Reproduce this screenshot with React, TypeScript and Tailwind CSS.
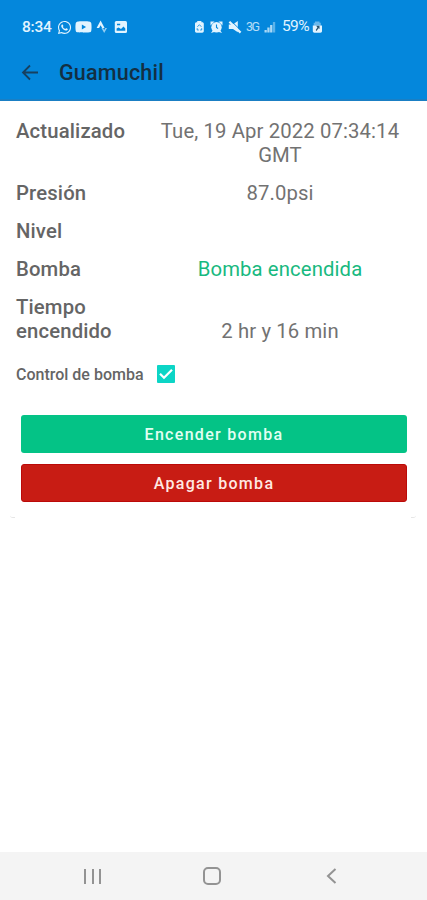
import type { ReactNode } from "react";
import { FaWhatsapp, FaYoutube } from "react-icons/fa";

type RowProps = {
  label: string;
  children?: ReactNode;
};

function StatusBar() {
  return (
    <div className="flex h-[54px] items-center pl-[22px] text-[#e2f4ff]">
      <span className="w-[35px] pt-px text-[15.5px] leading-none font-medium tracking-[-0.2px]">8:34</span>
      <FaWhatsapp className="size-[15px]" />
      <FaYoutube className="ml-[3px] h-[16px] w-[17px]" />
      {/* Strava */}
      <svg className="ml-[4px]" width="12" height="14" viewBox="0 0 12 14" fill="currentColor">
        <path d="M4.600 0.600 8.600 8H6.100L4.600 5.300 3.100 8H.6z" />
        <path d="M5.400 8h1.800l1 1.900 1-1.900H11L8.200 13z" opacity=".65" />
      </svg>
      {/* Picture */}
      <svg className="ml-[6px]" width="14" height="14" viewBox="0 0 14 14">
        <rect x=".8" y="1" width="12.200" height="12" rx="1.500" fill="currentColor" />
        <path d="M3 3.800h3.200v1.500H3zM2.600 10.800v-2.400l2-1 2.400 1.500 2.500-2.300 1.800 1.900v2.300z" fill="#0487dc" />
      </svg>

      <div className="ml-[66px] flex items-center">
        {/* Battery saver */}
        <svg width="11" height="14" viewBox="0 0 11 14">
          <path d="M3.200 1h4.200v1.200h.8c1 0 1.600.7 1.600 1.600V11c0 1-.6 1.700-1.600 1.700H2.600C1.600 12.700 1 12 1 11V3.800c0-.9.6-1.600 1.600-1.600h.6z" fill="currentColor" />
          <path d="M3.400 6.800 5.400 4.700l2 2.100M3.200 8.200v1.800h1.600M7.700 8.200v1.800H6.100" fill="none" stroke="#0487dc" strokeWidth=".8" />
        </svg>
        {/* Alarm */}
        <svg className="ml-[5px]" width="13" height="14" viewBox="0 0 13 14">
          <circle cx="6.500" cy="7.200" r="5.200" fill="currentColor" />
          <path d="M.5 1.500h4L.5 5.500zM12.500 1.500h-4l4 4zM1 13l2-3 2 1.700zM12 13l-2-3-2 1.700z" fill="currentColor" />
          <path d="M6.500 4.500v3l1.600 1" fill="none" stroke="#0487dc" strokeWidth="1.100" />
        </svg>
        {/* Muted */}
        <svg className="ml-[5px]" width="14" height="14" viewBox="0 0 14 14">
          <path d="M.8 4.600h4L9.800 1v11.200L5 9H.8z" fill="currentColor" />
          <path d="M3.600 1.400 13.400 11" stroke="#0487dc" strokeWidth="1" />
          <path d="M1.400 1.800 12.600 12.600" stroke="currentColor" strokeWidth="2.200" />
        </svg>
        <span className="ml-[4px] w-[16px] text-[12.500px] leading-none tracking-[-1.500px] opacity-80">3G</span>
        <svg className="ml-[2px]" width="12" height="14" viewBox="0 0 12 14" fill="currentColor">
          <path d="M.5 10h2.300v2.500H.5zM3.300 7.500h2.300v5H3.300zM6.100 5h2.300v7.500H6.100z" opacity=".75" />
          <path d="M8.900 2h2.300v10.500H8.900z" opacity=".4" />
        </svg>
        <span className="ml-[6px] w-[29px] text-[15.500px] leading-none tracking-[-0.600px]">59%</span>
        {/* Battery charging */}
        <svg className="ml-px" width="11" height="14" viewBox="0 0 11 14">
          <path d="M3 1.500h4.500v1.300h1.300v3H1.700v-3H3z" fill="currentColor" opacity=".45" />
          <path d="M.8 5.500h9.200V11c0 1-.6 1.700-1.600 1.700h-6c-1 0-1.600-.7-1.600-1.700z" fill="currentColor" />
          <path d="M4.200 5.800h3.300v3.200L6.500 8.200l-2 2.700-.8-.8 1.700-2.600z" fill="#27536e" />
        </svg>
      </div>
    </div>
  );
}

function Header() {
  return (
    <header className="h-[101px] border-b-2 border-[#1a7fc4] bg-[#0487dc]">
      <StatusBar />
      <div className="flex h-[37px] items-center pl-[21px]">
        <svg width="18" height="18" viewBox="0 0 18 18" fill="none" stroke="#17405f" strokeWidth="1.800">
          <path d="M17 8.500H2M9 1.500l-7 7 7 7" />
        </svg>
        <h1 className="ml-[20px] text-[21.500px] leading-none font-medium tracking-[0.200px] text-[#132f43]">Guamuchil</h1>
      </div>
    </header>
  );
}

function Row({ label, children }: RowProps) {
  return (
    <div className="flex text-[20.300px] leading-[24px] text-[#727272]">
      <dt className="w-[128px] font-medium tracking-[0.150px] text-[#656565]">{label}</dt>
      <dd className="flex w-[272px] items-end justify-center text-center tracking-[0.120px]">{children}</dd>
    </div>
  );
}

function NavigationBar() {
  return (
    <nav className="flex h-[48px] items-center bg-[#f4f4f4] text-[#939393]">
      <div className="ml-[84px] flex w-[17px] justify-between">
        <span className="h-[15px] w-[2px] bg-current" />
        <span className="h-[15px] w-[2px] bg-current" />
        <span className="h-[15px] w-[2px] bg-current" />
      </div>
      <span className="ml-[102px] size-[18px] rounded-[5px] border-2 border-current" />
      <svg className="ml-[105px]" width="11" height="16" viewBox="0 0 11 16" fill="none" stroke="currentColor" strokeWidth="2">
        <path d="M9.500 1 2 8l7.500 7" />
      </svg>
    </nav>
  );
}

export default function App() {
  return (
    <div className="flex h-[900px] w-[427px] flex-col overflow-hidden bg-white font-[Roboto,sans-serif]">
      <Header />

      <main className="grow pt-[18px]">
        <dl className="flex flex-col gap-[14px] pl-[16px]">
          <Row label="Actualizado">Tue, 19 Apr 2022 07:34:14 GMT</Row>
          <Row label="Presión">87.0psi</Row>
          <Row label="Nivel" />
          <Row label="Bomba">
            <span className="text-[#18b980]">Bomba encendida</span>
          </Row>
          <Row label="Tiempo encendido">2 hr y 16 min</Row>
        </dl>

        <div className="mt-[21px] flex h-[19px] items-center pl-[16px]">
          <span className="w-[141px] pt-[2px] text-[16px] font-medium whitespace-nowrap text-[#656565]">Control de bomba</span>
          <span className="flex size-[18px] items-center justify-center rounded-[1px] bg-[#0cd5c6] text-white">
            <svg width="14" height="12" viewBox="0 0 14 12" fill="none" stroke="currentColor" strokeWidth="2.200">
              <path d="M1 5.800 5 9.800 13 1.800" />
            </svg>
          </span>
        </div>

        {/* Pump actions */}
        <div className="mt-[32px] flex flex-col gap-[11px] pr-[20px] pl-[21px] text-[16px] font-medium tracking-[1.300px]">
          <button className="h-[38px] rounded-[3px] bg-[#04c386] pt-[2px] text-[#e2fff3]">Encender bomba</button>
          <button className="h-[38px] rounded-[3px] border border-[#bb0a09] bg-[#c81c14] pt-[2px] text-[#ffe9e3]">Apagar bomba</button>
        </div>

        {/* Bottom corners of the card */}
        <div className="mt-[13px] flex justify-between pr-[11px] pl-[10px]">
          <span className="h-[3px] w-[5px] rounded-bl-[3px] border-b border-[#e6e6e6]" />
          <span className="h-[3px] w-[5px] rounded-br-[3px] border-b border-[#e6e6e6]" />
        </div>
      </main>

      <NavigationBar />
    </div>
  );
}
